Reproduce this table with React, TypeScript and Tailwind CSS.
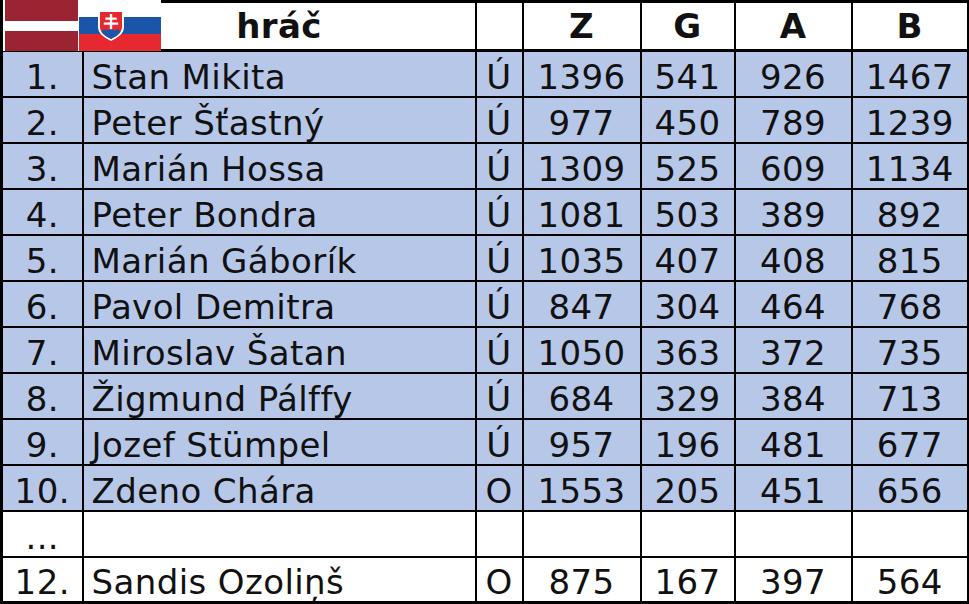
import React from "react";

type Row = { n: string; name: string; p: string; z: string; g: string; a: string; b: string; blue: boolean };

const rows: Row[] = [
  { n: "1.", name: "Stan Mikita", p: "Ú", z: "1396", g: "541", a: "926", b: "1467", blue: true },
  { n: "2.", name: "Peter Šťastný", p: "Ú", z: "977", g: "450", a: "789", b: "1239", blue: true },
  { n: "3.", name: "Marián Hossa", p: "Ú", z: "1309", g: "525", a: "609", b: "1134", blue: true },
  { n: "4.", name: "Peter Bondra", p: "Ú", z: "1081", g: "503", a: "389", b: "892", blue: true },
  { n: "5.", name: "Marián Gáborík", p: "Ú", z: "1035", g: "407", a: "408", b: "815", blue: true },
  { n: "6.", name: "Pavol Demitra", p: "Ú", z: "847", g: "304", a: "464", b: "768", blue: true },
  { n: "7.", name: "Miroslav Šatan", p: "Ú", z: "1050", g: "363", a: "372", b: "735", blue: true },
  { n: "8.", name: "Žigmund Pálffy", p: "Ú", z: "684", g: "329", a: "384", b: "713", blue: true },
  { n: "9.", name: "Jozef Stümpel", p: "Ú", z: "957", g: "196", a: "481", b: "677", blue: true },
  { n: "10.", name: "Zdeno Chára", p: "O", z: "1553", g: "205", a: "451", b: "656", blue: true },
  { n: "...", name: "", p: "", z: "", g: "", a: "", b: "", blue: false },
  { n: "12.", name: "Sandis Ozoliņš", p: "O", z: "875", g: "167", a: "397", b: "564", blue: false },
];

function Flags() {
  return (
    <div className="absolute left-0 top-[-3px] z-10 flex h-[51px] w-[158px] bg-white">
      <svg width="76" height="51" viewBox="0 0 76 51" className="block">
        <rect x="2" y="0" width="73" height="51" fill="#9b2433" />
        <rect x="2" y="21" width="73" height="10" fill="#ffffff" />
      </svg>
      <svg width="82" height="51" viewBox="0 0 82 51" className="block">
        <rect x="0" y="0" width="82" height="17" fill="#ffffff" />
        <rect x="0" y="17" width="82" height="17" fill="#1b55a8" />
        <rect x="0" y="34" width="82" height="17" fill="#e62830" />
        <path d="M19 10 L45 10 L45 27 C45 34 38 38 32 41 C26 38 19 34 19 27 Z" fill="#ffffff" />
        <path d="M21 12 L43 12 L43 27 C43 33 37 36 32 39 C27 36 21 33 21 27 Z" fill="#e62830" />
        <path d="M30.8 14 h2.4 v3.5 h4.5 v2.2 h-4.5 v2.8 h6 v2.2 h-6 v5 h-2.4 v-5 h-6 v-2.2 h6 v-2.8 h-4.5 v-2.2 h4.5 Z" fill="#ffffff" />
        <path d="M22.5 32 C24 29 27 29 28 31 C29 28.5 35 28.5 36 31 C37 29 40 29 41.5 32 C39.5 35 36 37 32 39 C28 37 24.5 35 22.5 32 Z" fill="#1b55a8" />
      </svg>
    </div>
  );
}

export default function App() {
  const cell = "border-2 border-black align-bottom leading-[38px] p-0";
  const head = "border-2 border-b-[3px] border-black p-0 text-center align-middle leading-[38px]";
  return (
    <div
      className="w-[969px] h-[604px] bg-white overflow-hidden"
      style={{ fontFamily: '"DejaVu Sans", Verdana, sans-serif' }}
    >
      <table className="table-fixed border-collapse border-[3px] border-black text-[34px] tracking-[0.4px] text-[#111]" style={{ width: 967 }}>
        <colgroup>
          <col style={{ width: 81 }} />
          <col style={{ width: 393 }} />
          <col style={{ width: 47 }} />
          <col style={{ width: 118 }} />
          <col style={{ width: 94 }} />
          <col style={{ width: 117 }} />
          <col style={{ width: 117 }} />
        </colgroup>
        <thead>
          <tr className="h-[49px] bg-white font-bold">
            <th className="relative border-2 border-b-[3px] border-black p-0">
              <Flags />
            </th>
            <th className={head}>hráč</th>
            <th className="border-2 border-b-[3px] border-black p-0"></th>
            <th className={head}>Z</th>
            <th className={head}>G</th>
            <th className={head}>A</th>
            <th className={head}>B</th>
          </tr>
        </thead>
        <tbody>
          {rows.map((r) => (
            <tr key={r.n} className={r.blue ? "h-[46px] bg-[#b7c7e8]" : "h-[46px] bg-white"}>
              <td className={`${cell} text-center`}>{r.n}</td>
              <td className={`${cell} pl-[8px] text-left whitespace-nowrap`}>{r.name}</td>
              <td className={`${cell} text-center`}>{r.p}</td>
              <td className={`${cell} text-center`}>{r.z}</td>
              <td className={`${cell} text-center`}>{r.g}</td>
              <td className={`${cell} text-center`}>{r.a}</td>
              <td className={`${cell} text-center`}>{r.b}</td>
            </tr>
          ))}
        </tbody>
      </table>
    </div>
  );
}
